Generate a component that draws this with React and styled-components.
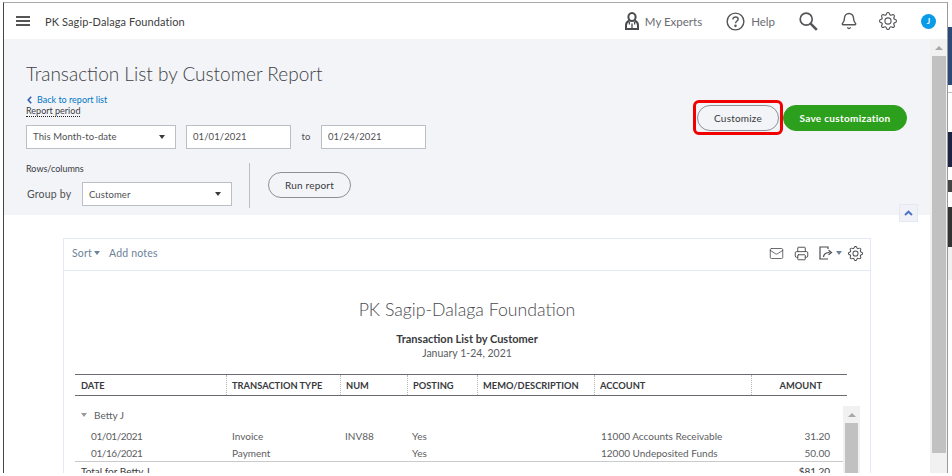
import React from 'react';
import styled, { createGlobalStyle } from 'styled-components';
import { Bell, Mail, Printer } from 'lucide-react';
import { BsGear } from 'react-icons/bs';

const GlobalStyle = createGlobalStyle`
  html, body {
    margin: 0;
    padding: 0;
    background: #fff;
    overflow: hidden;
  }
  * {
    box-sizing: border-box;
  }
`;

const Page = styled.div`
  width: 952px;
  height: 476px;
  padding: 2px 0 0 3px;
  display: flex;
  align-items: flex-start;
  background: #fff;
  font-family: Lato, "Open Sans", sans-serif;
  color: #393a3d;
  overflow: hidden;
`;

const Window = styled.div`
  width: 945px;
  height: 471px;
  display: flex;
  flex-direction: column;
  border-top: 1px solid #a9a9a9;
  border-left: 1px solid #444;
  border-right: 1px solid #9a9a9a;
  overflow: hidden;
  flex-shrink: 0;
`;

const BackStrip = styled.div`
  flex: 1;
  display: flex;
  flex-direction: column;
  padding-top: 14px;
`;

const StripPiece = styled.div`
  height: ${props => props.$h}px;
  background: ${props => props.$bg};
`;

/* top bar */
const Header = styled.header`
  height: 36px;
  flex-shrink: 0;
  display: flex;
  align-items: center;
  background: #fff;
  padding-left: 12px;
`;

const Burger = styled.div`
  width: 14px;
  height: 10px;
  display: flex;
  flex-direction: column;
  justify-content: space-between;
  margin-right: 15px;
  span {
    height: 2px;
    background: #555;
  }
`;

const Company = styled.div`
  font-size: 11px;
  color: #404040;
  letter-spacing: 0.1px;
`;

const HeaderTools = styled.div`
  margin-left: auto;
  display: flex;
  align-items: center;
  color: #6b6c72;
`;

const HeaderLink = styled.div`
  display: flex;
  align-items: center;
  gap: 6px;
  font-size: 11.5px;
  color: #6b6c72;
  margin-right: ${props => props.$mr}px;
`;

const Avatar = styled.div`
  width: 15px;
  height: 15px;
  border-radius: 50%;
  background: #0a9be8;
  color: #fff;
  font-size: 8px;
  font-weight: 700;
  display: flex;
  align-items: center;
  justify-content: center;
  margin: 0 11px 0 0;
`;

/* everything under the top bar */
const Content = styled.div`
  flex: 1;
  display: flex;
  min-height: 0;
`;

const Main = styled.main`
  flex: 1;
  min-width: 0;
  position: relative;
  overflow: hidden;
`;

const Filters = styled.section`
  height: 176px;
  background: #f3f4f8;
  padding: 24px 22px 0;
  display: flex;
  flex-direction: column;
`;

const Title = styled.h1`
  margin: 0;
  font-size: 19px;
  line-height: 22px;
  font-weight: 300;
  color: #404145;
`;

const BackLink = styled.a`
  margin: 9px 0 0 1px;
  display: flex;
  align-items: center;
  gap: 5px;
  font-size: 9px;
  line-height: 11px;
  color: #0077c5;
`;

const SmallLabel = styled.div`
  font-size: 9px;
  line-height: 11px;
  color: #393a3d;
  align-self: flex-start;
  border-bottom: ${props => (props.$dotted ? '1px dotted #222' : 'none')};
`;

const PeriodRow = styled.div`
  margin-top: 2px;
  display: flex;
  align-items: center;
  justify-content: space-between;
`;

const PeriodFields = styled.div`
  display: flex;
  align-items: center;
`;

const Field = styled.div`
  width: ${props => props.$w}px;
  height: 24px;
  flex-shrink: 0;
  background: #fff;
  border: 1px solid #babec5;
  display: flex;
  align-items: center;
  justify-content: space-between;
  padding: 0 10px 0 6px;
  font-size: 9.5px;
  color: #4e4f52;
  letter-spacing: 0.1px;
  margin-right: ${props => props.$mr || 0}px;
`;

const Caret = styled.span`
  width: 0;
  height: 0;
  border-left: 3px solid transparent;
  border-right: 3px solid transparent;
  border-top: 4px solid ${props => props.$color || '#393a3d'};
`;

const ToText = styled.span`
  font-size: 9.5px;
  width: 30px;
  text-align: center;
  color: #4e4f52;
`;

const Actions = styled.div`
  display: flex;
  align-items: center;
  gap: 4px;
  position: relative;
  top: -19px;
  margin-right: 1px;
`;

const Pill = styled.button`
  height: 26px;
  flex-shrink: 0;
  width: ${props => props.$w}px;
  margin-top: ${props => props.$mt || 0}px;
  border-radius: 13px;
  border: 1px solid ${props => (props.$primary ? '#2ca01c' : '#8d9096')};
  background: ${props => (props.$primary ? '#2ca01c' : 'transparent')};
  color: ${props => (props.$primary ? '#fff' : '#393a3d')};
  font-family: inherit;
  font-size: 10px;
  font-weight: ${props => (props.$primary ? 700 : 400)};
  letter-spacing: ${props => (props.$primary ? 0.3 : 0.2)}px;
  padding: 0;
`;

const Highlight = styled.div`
  width: 90px;
  height: 35px;
  margin-right: -4px;
  border: 3px solid #f00000;
  border-radius: 6px;
  display: flex;
  align-items: center;
  justify-content: center;
`;

const RowsBlock = styled.div`
  margin-top: 9px;
  display: flex;
  align-items: flex-start;
`;

const GroupColumn = styled.div`
  width: 228px;
`;

const GroupRow = styled.div`
  margin-top: 8px;
  display: flex;
  align-items: center;
  gap: 10px;
`;

const GroupLabel = styled.span`
  font-size: 10.5px;
  color: #4e4f52;
  margin-left: 1px;
  width: 45px;
  white-space: nowrap;
  letter-spacing: 0.2px;
`;

const Divider = styled.div`
  width: 1px;
  height: 45px;
  margin: 0 18px 0 -5px;
  background: #babec5;
`;

const CollapseButton = styled.div`
  position: absolute;
  left: 895px;
  top: 165px;
  width: 19px;
  height: 18px;
  background: #f0f2f8;
  border: 1px solid #e3e8f5;
  display: flex;
  align-items: center;
  justify-content: center;
`;

/* report */
const ReportArea = styled.div`
  padding: 23px 0 0 59px;
`;

const Panel = styled.div`
  position: relative;
  width: 808px;
  height: 240px;
  border: 1px solid #e3e9f5;
  border-bottom: none;
`;

const PanelBar = styled.div`
  height: 32px;
  display: flex;
  align-items: center;
  padding: 0 7px 3px 8px;
  border-bottom: 1px solid #e3e9f5;
`;

const BarLink = styled.span`
  display: flex;
  align-items: center;
  gap: 2px;
  font-size: 10.5px;
  color: #6b8299;
  letter-spacing: 0.2px;
  margin-right: ${props => props.$mr || 0}px;
`;

const BarIcons = styled.div`
  margin-left: auto;
  display: flex;
  align-items: center;
  color: #4a4b4f;
`;

const BarIcon = styled.span`
  display: flex;
  margin-right: ${props => props.$mr || 0}px;
`;

const ReportHead = styled.div`
  padding-top: 29px;
  text-align: center;
`;

const ReportCompany = styled.div`
  font-size: 17.7px;
  line-height: 20px;
  font-weight: 300;
  color: #4a4b4f;
`;

const ReportName = styled.div`
  margin-top: 13px;
  font-size: 11px;
  line-height: 12px;
  font-weight: 700;
  color: #393a3d;
`;

const ReportDates = styled.div`
  margin-top: 2px;
  font-size: 10.5px;
  line-height: 12px;
  color: #5c5d61;
`;

const Table = styled.div`
  margin: 15px 0 0 11px;
  width: 772px;
`;

const columns = '151px 114px 67px 70px 117px 157px 96px';

const HeadRow = styled.div`
  display: grid;
  grid-template-columns: ${columns};
  height: 22px;
  border-top: 1px solid #6b6c72;
  border-bottom: 1px solid #6b6c72;
`;

const HeadCell = styled.div`
  display: flex;
  align-items: center;
  justify-content: ${props => (props.$right ? 'flex-end' : 'flex-start')};
  padding: ${props => (props.$right ? '0 25px 0 0' : '0 0 0 5px')};
  padding-left: ${props => (props.$first ? 6 : 5)}px;
  border-left: ${props => (props.$first ? 'none' : '1px dotted #b5b5b5')};
  font-size: 9.3px;
  font-weight: 700;
  color: #393a3d;
  white-space: nowrap;
`;

const GroupTitle = styled.div`
  display: flex;
  align-items: center;
  gap: 7px;
  height: 17px;
  margin-top: 10px;
  padding-left: 6px;
  font-size: 10px;
  color: #5c5d61;
`;

const DataRow = styled.div`
  display: grid;
  grid-template-columns: ${columns};
  height: 17px;
  align-items: center;
  margin-top: ${props => props.$mt || 0}px;
  font-size: 10px;
  color: #5c5d61;
`;

const DataCell = styled.div`
  padding-left: ${props => props.$pl ?? 6}px;
  padding-right: ${props => (props.$right ? 17 : 0)}px;
  text-align: ${props => (props.$right ? 'right' : 'left')};
  letter-spacing: ${props => (props.$date ? -0.4 : 0)}px;
  white-space: nowrap;
`;

const TotalRow = styled(DataRow)`
  width: 768px;
  margin-top: 0;
  padding-top: 1px;
  border-top: 1px solid #c9cacc;
  color: #393a3d;
`;

const InnerScroll = styled.div`
  position: absolute;
  left: 779px;
  top: 167px;
  bottom: 0;
  width: 17px;
  background: #f1f1f1;
  padding: 0 2px;
`;

const ScrollArrow = styled.div`
  height: 17px;
  display: flex;
  align-items: center;
  justify-content: center;
  &:before {
    content: '';
    border-left: 4px solid transparent;
    border-right: 4px solid transparent;
    border-bottom: 4px solid #a8a8a8;
  }
`;

const Thumb = styled.div`
  background: #c1c1c1;
  height: ${props => props.$h}px;
`;

const PageScroll = styled.div`
  width: 17px;
  flex-shrink: 0;
  background: #f1f1f1;
  padding: 0 1px 0 2px;
`;

function ExpertsIcon() {
  return (
    <svg width="14" height="18" viewBox="0 0 14 18" fill="none" stroke="#4a4b4f" strokeWidth="2">
      <ellipse cx="7" cy="5" rx="3.6" ry="4" />
      <path d="M4 8.8C1.9 9.6 1 11.2 1 13.6V17h12v-3.4c0-2.4-.9-4-3-4.8" />
      <path d="M4.4 9.6v3M9.6 9.6v3M7 11.5V17" strokeWidth="1.3" />
    </svg>
  );
}

function HelpIcon() {
  return (
    <svg width="19" height="19" viewBox="0 0 20 20" fill="none" stroke="#55565a" strokeWidth="1.5">
      <circle cx="10" cy="10" r="8.8" />
      <path d="M7.3 7.8c0-1.6 1.2-2.6 2.8-2.6s2.7 1 2.7 2.3c0 2-2.8 2-2.8 4.4" />
      <circle cx="10" cy="14.6" r=".6" fill="#55565a" />
    </svg>
  );
}

function SearchIcon() {
  return (
    <svg width="19" height="19" viewBox="0 0 19 19" fill="none" stroke="#55565a">
      <circle cx="7.2" cy="7.2" r="6" strokeWidth="1.7" />
      <path d="M11.6 11.6l6.2 6.2" strokeWidth="2.6" />
    </svg>
  );
}

function ExportIcon() {
  return (
    <svg width="14" height="14" viewBox="0 0 14 14" fill="none" stroke="#4a4b4f" strokeWidth="1.2">
      <path d="M8 1H1v12h8" />
      <path d="M8 1l1 0v2" />
      <path d="M4.5 11c.3-3 2.2-4.5 6-4.5" />
      <path d="M9.5 4.2l3 2.3-3 2.3" />
    </svg>
  );
}

function ChevronLeft() {
  return (
    <svg width="5" height="8" viewBox="0 0 5 8" fill="none" stroke="#2f5fb3" strokeWidth="1.6">
      <path d="M4.2.8L1.2 4l3 3.2" />
    </svg>
  );
}

function ChevronUp() {
  return (
    <svg width="9" height="6" viewBox="0 0 9 6" fill="none" stroke="#4f74c4" strokeWidth="2">
      <path d="M1 5l3.5-3.3L8 5" />
    </svg>
  );
}

const stripPieces = [
  { h: 11, bg: '#fff' },
  { h: 58, bg: '#2b4a78' },
  { h: 7, bg: '#fff' },
  { h: 1, bg: '#bdbdbd' },
  { h: 39, bg: '#fff' },
  { h: 35, bg: '#1c2444' },
  { h: 13, bg: '#fff' },
  { h: 12, bg: '#444' },
  { h: 15, bg: '#fff' },
  { h: 40, bg: '#333' },
  { h: 33, bg: '#f1f1f1' },
];

const headers = ['DATE', 'TRANSACTION TYPE', 'NUM', 'POSTING', 'MEMO/DESCRIPTION', 'ACCOUNT'];

export default function App() {
  return (
    <Page>
      <GlobalStyle />
      <Window>
        <Header>
          <Burger>
            <span />
            <span />
            <span />
          </Burger>
          <Company>PK Sagip-Dalaga Foundation</Company>
          <HeaderTools>
            <HeaderLink $mr={24}>
              <ExpertsIcon />
              My Experts
            </HeaderLink>
            <HeaderLink $mr={24}>
              <HelpIcon />
              Help
            </HeaderLink>
            <HeaderLink $mr={22}>
              <SearchIcon />
            </HeaderLink>
            <HeaderLink $mr={21}>
              <Bell size={18} strokeWidth={1.9} color="#55565a" />
            </HeaderLink>
            <HeaderLink $mr={24}>
              <BsGear size={18} color="#55565a" />
            </HeaderLink>
            <Avatar>J</Avatar>
          </HeaderTools>
        </Header>
        <Content>
          <Main>
            <Filters>
              <Title>Transaction List by Customer Report</Title>
              <BackLink>
                <ChevronLeft />
                Back to report list
              </BackLink>
              <SmallLabel $dotted>Report period</SmallLabel>
              <PeriodRow>
                <PeriodFields>
                  <Field $w={150} $mr={10}>
                    This Month-to-date
                    <Caret />
                  </Field>
                  <Field $w={105}>01/01/2021</Field>
                  <ToText>to</ToText>
                  <Field $w={105}>01/24/2021</Field>
                </PeriodFields>
                <Actions>
                  <Highlight>
                    <Pill $w={82}>Customize</Pill>
                  </Highlight>
                  <Pill $primary $w={124}>Save customization</Pill>
                </Actions>
              </PeriodRow>
              <RowsBlock>
                <GroupColumn>
                  <SmallLabel>Rows/columns</SmallLabel>
                  <GroupRow>
                    <GroupLabel>Group by</GroupLabel>
                    <Field $w={150}>
                      Customer
                      <Caret />
                    </Field>
                  </GroupRow>
                </GroupColumn>
                <Divider />
                <Pill $w={83} $mt={9}>Run report</Pill>
              </RowsBlock>
            </Filters>
            <CollapseButton>
              <ChevronUp />
            </CollapseButton>
            <ReportArea>
              <Panel>
                <PanelBar>
                  <BarLink $mr={9}>
                    Sort
                    <Caret $color="#6b8299" />
                  </BarLink>
                  <BarLink>Add notes</BarLink>
                  <BarIcons>
                    <BarIcon $mr={10}>
                      <Mail size={15} strokeWidth={1.3} />
                    </BarIcon>
                    <BarIcon $mr={10}>
                      <Printer size={15} strokeWidth={1.5} />
                    </BarIcon>
                    <BarIcon $mr={3}>
                      <ExportIcon />
                    </BarIcon>
                    <BarIcon $mr={6}>
                      <Caret $color="#6b8299" />
                    </BarIcon>
                    <BarIcon>
                      <BsGear size={15} />
                    </BarIcon>
                  </BarIcons>
                </PanelBar>
                <ReportHead>
                  <ReportCompany>PK Sagip-Dalaga Foundation</ReportCompany>
                  <ReportName>Transaction List by Customer</ReportName>
                  <ReportDates>January 1-24, 2021</ReportDates>
                </ReportHead>
                <Table>
                  <HeadRow>
                    {headers.map((h, i) => (
                      <HeadCell key={h} $first={i === 0}>{h}</HeadCell>
                    ))}
                    <HeadCell $right>AMOUNT</HeadCell>
                  </HeadRow>
                  <GroupTitle>
                    <Caret $color="#9a9a9a" />
                    Betty J
                  </GroupTitle>
                  <DataRow $mt={4}>
                    <DataCell $pl={16} $date>01/01/2021</DataCell>
                    <DataCell>Invoice</DataCell>
                    <DataCell $pl={5}>INV88</DataCell>
                    <DataCell $pl={5}>Yes</DataCell>
                    <DataCell />
                    <DataCell $pl={7}>11000 Accounts Receivable</DataCell>
                    <DataCell $right>31.20</DataCell>
                  </DataRow>
                  <DataRow>
                    <DataCell $pl={16} $date>01/16/2021</DataCell>
                    <DataCell>Payment</DataCell>
                    <DataCell />
                    <DataCell $pl={5}>Yes</DataCell>
                    <DataCell />
                    <DataCell $pl={7}>12000 Undeposited Funds</DataCell>
                    <DataCell $right>50.00</DataCell>
                  </DataRow>
                  <TotalRow>
                    <DataCell>Total for Betty J</DataCell>
                    <DataCell />
                    <DataCell />
                    <DataCell />
                    <DataCell />
                    <DataCell />
                    <DataCell $right>$81.20</DataCell>
                  </TotalRow>
                </Table>
                <InnerScroll>
                  <ScrollArrow />
                  <Thumb $h={60} />
                </InnerScroll>
              </Panel>
            </ReportArea>
          </Main>
          <PageScroll>
            <ScrollArrow />
            <Thumb $h={397} />
          </PageScroll>
        </Content>
      </Window>
      <BackStrip>
        {stripPieces.map((p, i) => (
          <StripPiece key={i} $h={p.h} $bg={p.bg} />
        ))}
      </BackStrip>
    </Page>
  );
}
